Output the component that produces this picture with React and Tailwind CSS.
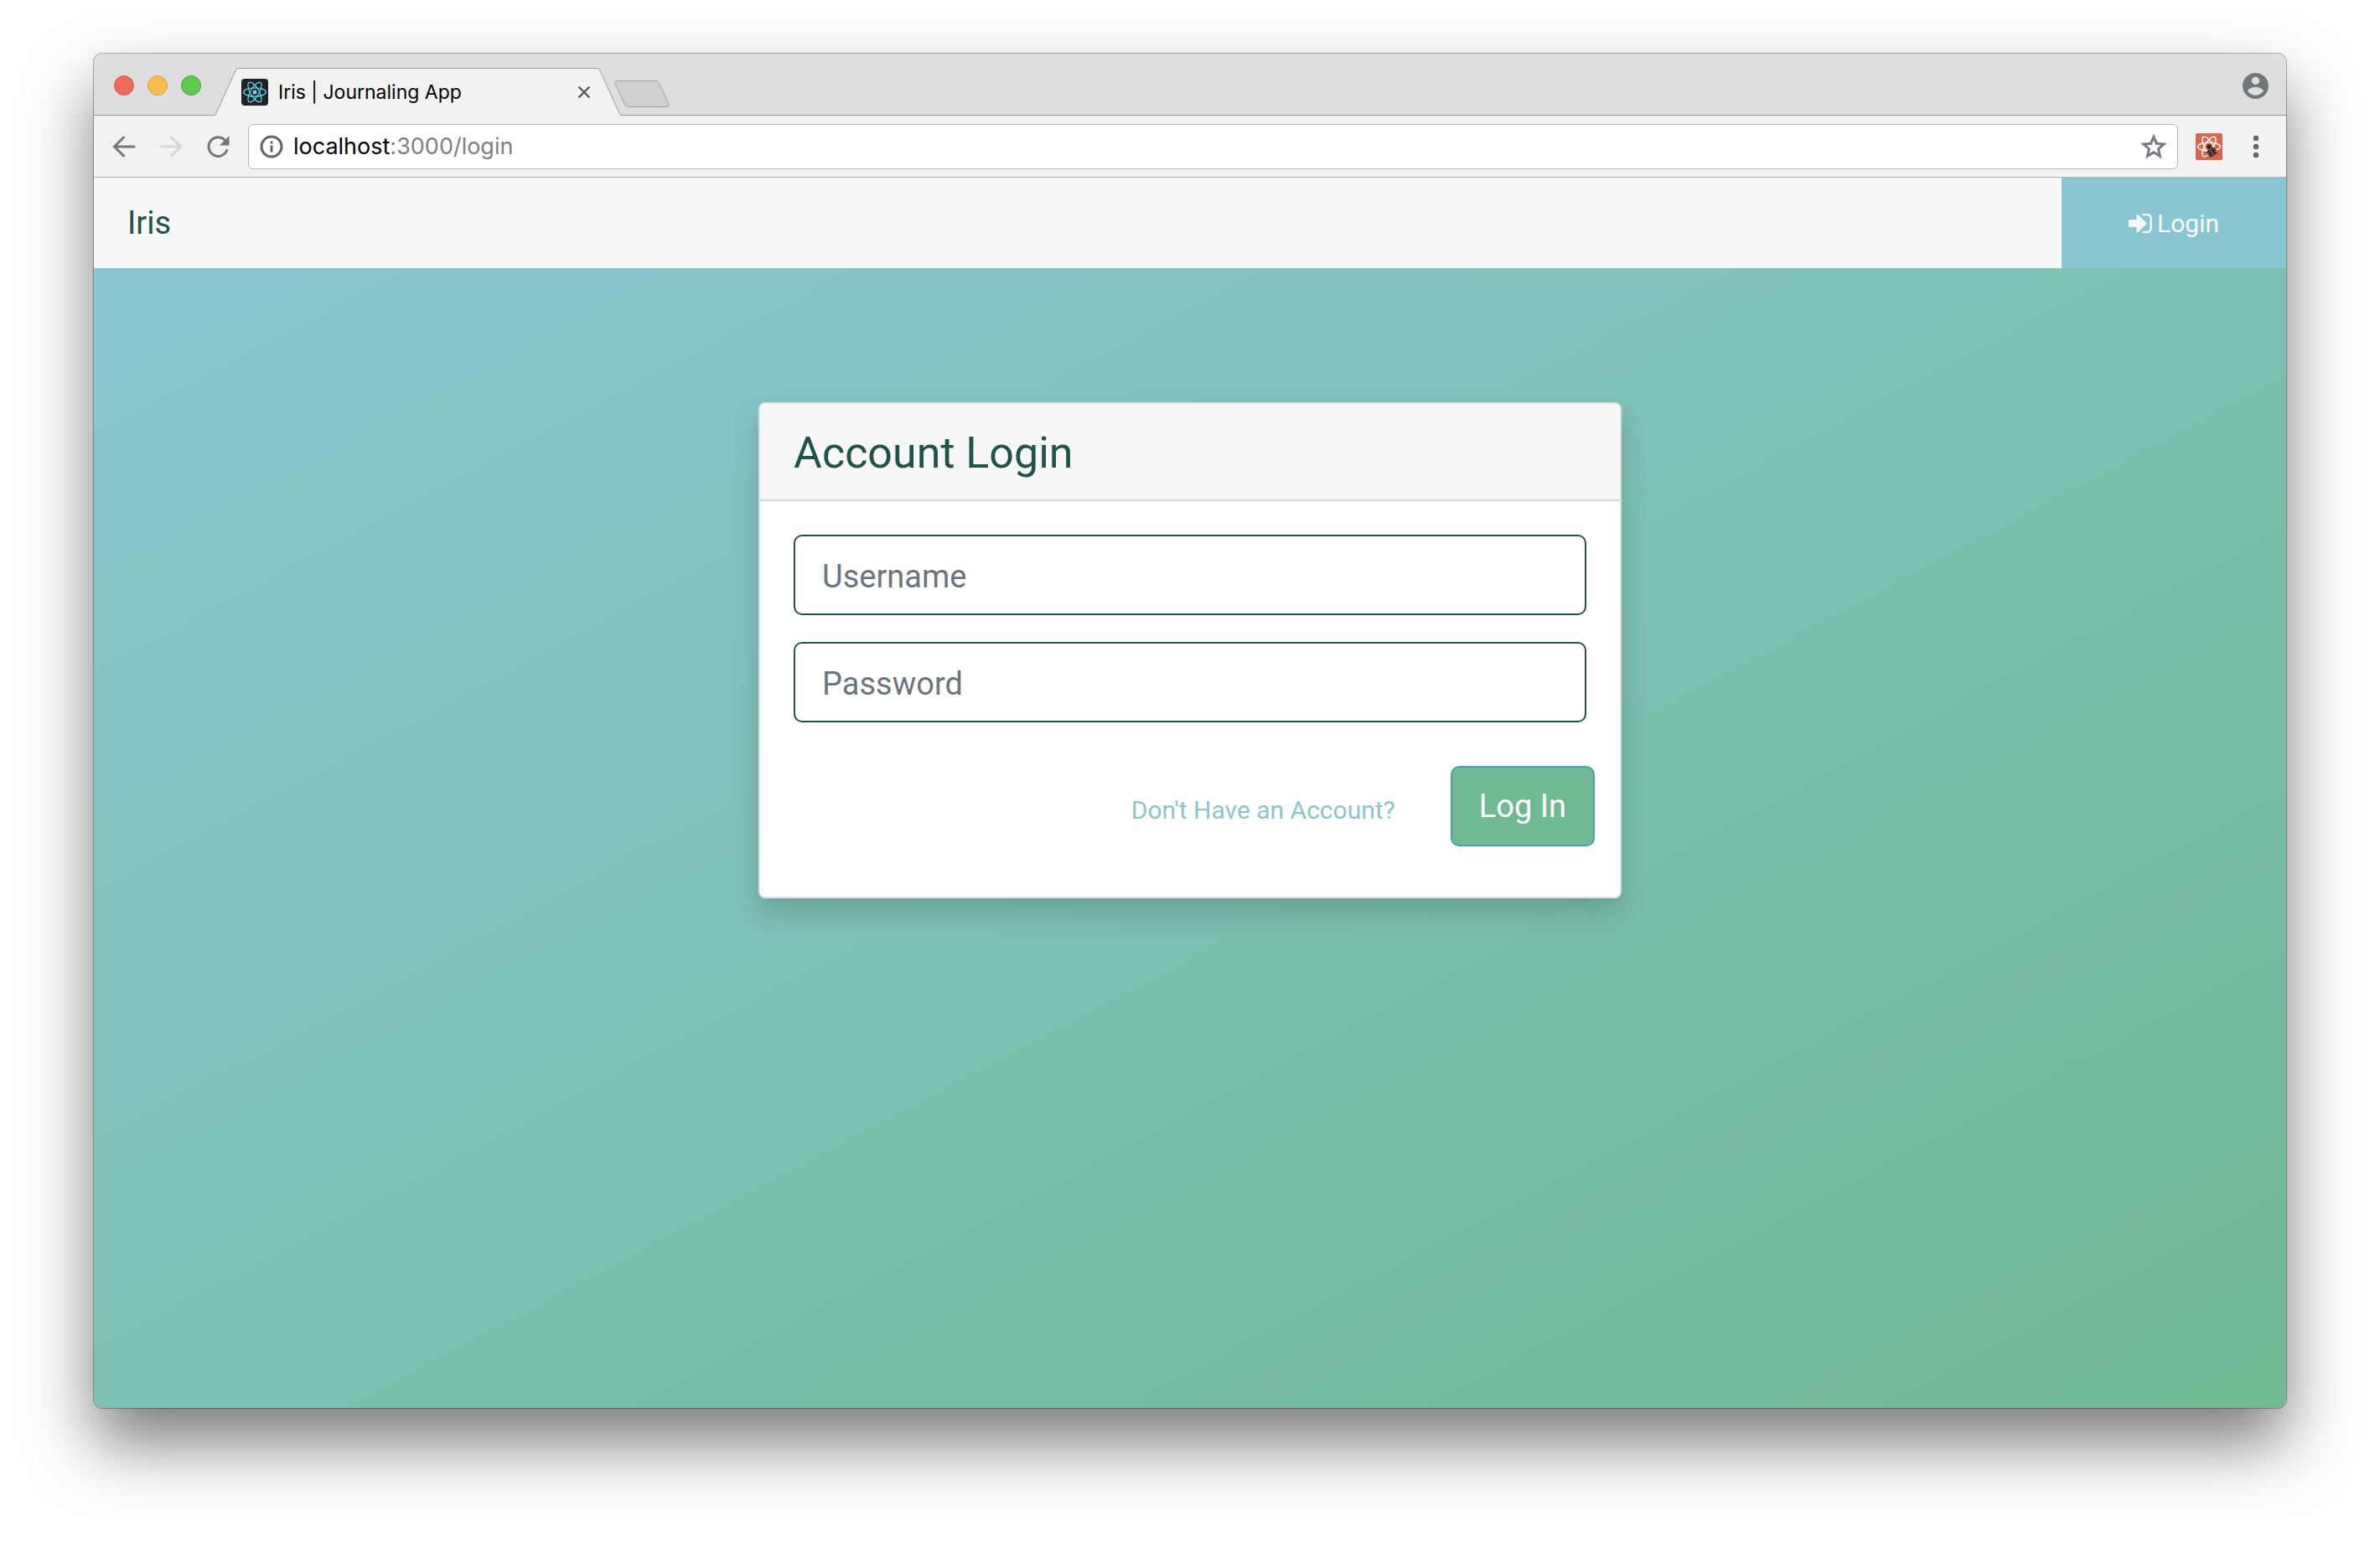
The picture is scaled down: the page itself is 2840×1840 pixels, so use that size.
import React from "react";

const orbit = (rx, ry) => [0, 60, 120].map((a) => (
  <ellipse key={a} cx="16" cy="16" rx={rx} ry={ry} transform={`rotate(${a} 16 16)`} />
));

function ReactFavicon() {
  return (
    <svg viewBox="0 0 32 32" className="size-8 shrink-0" aria-hidden="true">
      <rect width="32" height="32" rx="4" fill="#222" />
      <g fill="none" stroke="#61dafb" strokeWidth="1.2">{orbit(13.4, 5.1)}</g>
      <circle cx="16" cy="16" r="2.5" fill="#61dafb" />
    </svg>
  );
}

function DevtoolsIcon() {
  return (
    <svg viewBox="0 0 32 32" className="size-8" aria-hidden="true">
      <rect width="32" height="32" rx="2" fill="#d5694f" />
      <g fill="none" stroke="#fff" strokeWidth="1.4">{orbit(13.4, 5.1)}</g>
      <path d="M14.500 20.500l4-3 5 .5 3 8-4 5-7-1.500z" fill="#d5694f" />
      <circle cx="16" cy="16" r="2.800" fill="#2b2b2b" />
      <g transform="rotate(-30 19.500 23)" fill="#2b2b2b" stroke="#2b2b2b">
        <path d="M16 18.600h2.800v8.800c-2-.6-2.900-2-2.900-4.600zM20.400 18.600h2.800l.1 4.200c0 2.600-.9 4-2.900 4.600z" strokeWidth=".6" />
        <path d="M13.800 19.500l2 1M13.600 23h2M14.200 27l2-1.500M25.400 19.500l-2 1M25.600 23h-2M25 27l-2-1.500" strokeWidth="1.500" fill="none" />
      </g>
    </svg>
  );
}

function TabStrip() {
  return (
    <div className="flex h-[74px] items-end border-b border-[#9b9b9b] bg-[#dedede] pl-6">
      <div className="mb-[23px] flex gap-4">
        <button aria-label="Close window" className="size-6 rounded-full border border-[#d9574c] bg-[#ee6a5f]" />
        <button aria-label="Minimize window" className="size-6 rounded-full border border-[#dba13c] bg-[#f6be50]" />
        <button aria-label="Zoom window" className="size-6 rounded-full border border-[#4aa53c] bg-[#62c655]" />
      </div>
      <div className="-mb-px ml-4 flex h-[57px]">
        <svg viewBox="0 0 28 57" className="h-[57px] w-7 shrink-0" aria-hidden="true">
          <path d="M0 57L1 55.500 25 3Q26.500.5 28 .5V57z" fill="#f2f2f2" />
          <path d="M0 56.500Q1 56 2 54L25.500 2.500Q26.500.5 28 .5" fill="none" stroke="#9b9b9b" />
        </svg>
        <div className="flex w-[429px] items-center gap-3 border-t border-[#9b9b9b] bg-[#f2f2f2] pr-2 pl-1">
          <ReactFavicon />
          <span className="grow font-[Inter,sans-serif] text-[23px] text-black">Iris | Journaling App</span>
          <button aria-label="Close tab">
            <svg viewBox="0 0 16 16" className="size-4" stroke="#5a5a5a" strokeWidth="2.4" aria-hidden="true">
              <path d="M1.500 1.500l13 13M14.500 1.500l-13 13" />
            </svg>
          </button>
        </div>
        <svg viewBox="0 0 28 57" className="h-[57px] w-7 shrink-0" aria-hidden="true">
          <path d="M28 57L27 55.500 3 3Q1.500.5 0 .5V57z" fill="#f2f2f2" />
          <path d="M28 56.500Q27 56 26 54L2.500 2.500Q1.500.5 0 .5" fill="none" stroke="#9b9b9b" />
        </svg>
      </div>
      <button aria-label="New tab" className="-ml-2 mb-2">
        <svg viewBox="0 0 66 33" className="h-[33px] w-[66px]" aria-hidden="true">
          <path d="M3.500.5H49q3 0 4.500 3L65 28q1 3.500-2 3.500H17q-3 0-4.500-3L1 4Q0 .5 3.500.5z" fill="#d0d0d0" stroke="#a3a3a3" />
        </svg>
      </button>
      <button aria-label="Profile" className="mr-[18px] mb-4 ml-auto">
        <svg viewBox="2 2 20 20" className="m-[3px] size-[31px]" fill="#72777d" aria-hidden="true">
          <path d="M12 2C6.480 2 2 6.480 2 12s4.480 10 10 10 10-4.480 10-10S17.520 2 12 2zm0 3c1.660 0 3 1.340 3 3s-1.340 3-3 3-3-1.340-3-3 1.340-3 3-3zm0 14.200c-2.500 0-4.710-1.280-6-3.220.03-1.990 4-3.080 6-3.080 1.990 0 5.970 1.090 6 3.080-1.290 1.940-3.500 3.220-6 3.220z" />
        </svg>
      </button>
    </div>
  );
}

function Toolbar() {
  return (
    <div className="flex h-[74px] items-center border-b border-[#b4b4b4] bg-[#f2f2f2] pl-5 font-[Inter,sans-serif]">
      <div className="flex gap-6">
        <button aria-label="Back">
          <svg viewBox="0 0 32 32" className="size-8" fill="none" stroke="#72777d" strokeWidth="3" strokeLinecap="round" aria-hidden="true">
            <path d="M28 16H5M15.500 5L4.500 16l11 11" />
          </svg>
        </button>
        <button aria-label="Forward">
          <svg viewBox="0 0 32 32" className="size-8" fill="none" stroke="#d6d7d8" strokeWidth="3" strokeLinecap="round" aria-hidden="true">
            <path d="M4 16h23M16.500 5l11 11-11 11" />
          </svg>
        </button>
        <button aria-label="Reload">
          <svg viewBox="0 0 32 32" className="size-8" aria-hidden="true">
            <path d="M26.700 20.500A11.300 11.300 0 1 1 24.500 8.300" fill="none" stroke="#72777d" strokeWidth="3" strokeLinecap="round" />
            <path d="M29.500 3v11.500H18z" fill="#72777d" />
          </svg>
        </button>
      </div>
      <div className="ml-5 flex h-[54px] grow items-center rounded-md border border-[#b4b4b4] bg-white px-[13px]">
        <button aria-label="Site information">
          <svg viewBox="0 0 28 28" className="size-7" aria-hidden="true">
            <circle cx="14" cy="14" r="12" fill="none" stroke="#62666c" strokeWidth="3" />
            <path d="M12.500 12.500h3v8h-3zM12.500 7.500h3v3h-3z" fill="#62666c" />
          </svg>
        </button>
        <div
          role="textbox"
          aria-label="Address"
          contentEditable
          suppressContentEditableWarning
          className="ml-3 grow pt-0.5 text-[27px] text-[#808080] outline-none"
        >
          <span className="text-black">localhost</span>:3000/login
        </div>
        <button aria-label="Bookmark this page">
          <svg viewBox="2 2 20 19" className="h-[29px] w-[30px]" fill="#72777d" stroke="#72777d" strokeWidth=".4" aria-hidden="true">
            <path d="M22 9.240l-7.190-.62L12 2 9.190 8.630 2 9.240l5.460 4.730L5.820 21 12 17.270 18.180 21l-1.630-7.030L22 9.240zM12 15.400l-3.760 2.270 1-4.280-3.320-2.880 4.380-.38L12 6.100l1.710 4.040 4.380.38-3.320 2.880 1 4.280L12 15.400z" />
          </svg>
        </button>
      </div>
      <button aria-label="React developer tools" className="ml-[21px]"><DevtoolsIcon /></button>
      <button aria-label="Menu" className="mr-5 ml-6">
        <svg viewBox="0 0 32 32" className="size-8" fill="#62666c" aria-hidden="true">
          <circle cx="16" cy="6" r="3.200" />
          <circle cx="16" cy="16" r="3.200" />
          <circle cx="16" cy="26" r="3.200" />
        </svg>
      </button>
    </div>
  );
}

function Navbar() {
  return (
    <nav className="flex h-[108px] items-center justify-between bg-[#f8f8f8] pl-10">
      <a href="#home" className="text-[38px] text-[#20534a]">Iris</a>
      <a href="#login" className="flex h-full items-center gap-1.5 bg-[#8ac6d1] px-20 text-[30px] text-[#f8f8f8]">
        <svg viewBox="0 256 1536 1280" className="h-[23px] w-7" fill="currentColor" aria-hidden="true">
          <path d="M1184 896q0 26-19 45l-544 544q-19 19-45 19t-45-19-19-45v-288h-448q-26 0-45-19t-19-45v-384q0-26 19-45t45-19h448v-288q0-26 19-45t45-19 45 19l544 544q19 19 19 45zm352-352v704q0 119-84.500 203.500t-203.500 84.500h-320q-13 0-22.500-9.500t-9.500-22.500q0-4-1-20t-.5-26.500 3-23.500 10-19.500 20.500-6.500h320q66 0 113-47t47-113v-704q0-66-47-113t-113-47h-312l-11.500-1-11.500-3-8-5.500-7-9-2-13.500q0-4-1-20t-.5-26.500 3-23.500 10-19.500 20.500-6.500h320q119 0 203.500 84.500t84.500 203.500z" />
        </svg>
        Login
      </a>
    </nav>
  );
}

function Field({ label, type }) {
  return (
    <input
      type={type}
      aria-label={label}
      placeholder={label}
      className="block h-24 w-full rounded-[10px] border-2 border-[#20534a] bg-white px-8 pt-1 text-[38px] text-[#20534a] placeholder:text-[#6c757d]"
    />
  );
}

function LoginCard() {
  return (
    <form className="w-full max-w-[1030px] overflow-hidden rounded-lg border-2 border-[#dfdfdf] bg-white shadow-[0_16px_32px_rgba(0,0,0,0.17)]">
      <h1 className="border-b-2 border-[#d8d8d8] bg-[#f7f7f7] px-10 pt-6 pb-5 text-[52px] leading-[70px] text-[#20534a]">
        Account Login
      </h1>
      <div className="flex flex-col gap-8 px-10 pt-10">
        <Field label="Username" type="text" />
        <Field label="Password" type="password" />
      </div>
      <div className="flex items-center justify-end gap-[66px] pt-[52px] pr-[30px] pb-[60px]">
        <a href="#register" className="pt-2 text-[30px] text-[#8ac6d1]">Don't Have an Account?</a>
        <button type="button" className="h-24 rounded-[10px] border-2 border-[#4a9fb5] bg-[#71b894] px-8 text-[38px] text-white">
          Log In
        </button>
      </div>
    </form>
  );
}

export default function App() {
  return (
    <div className="flex min-h-screen flex-col bg-white px-28 pt-16 pb-40 font-[Roboto,sans-serif]">
      <div className="flex grow flex-col rounded-[10px] shadow-[0_0_0_1px_rgba(0,0,0,0.3),0_42px_80px_rgba(0,0,0,0.52)]">
        <div className="flex grow flex-col overflow-hidden rounded-[10px]">
          <TabStrip />
          <Toolbar />
          <Navbar />
          <main className="flex grow flex-col items-center bg-[linear-gradient(152deg,#8ac6d1,#7dc1b4_48%,#71b894)] px-8 pt-40">
            <LoginCard />
          </main>
        </div>
      </div>
    </div>
  );
}
